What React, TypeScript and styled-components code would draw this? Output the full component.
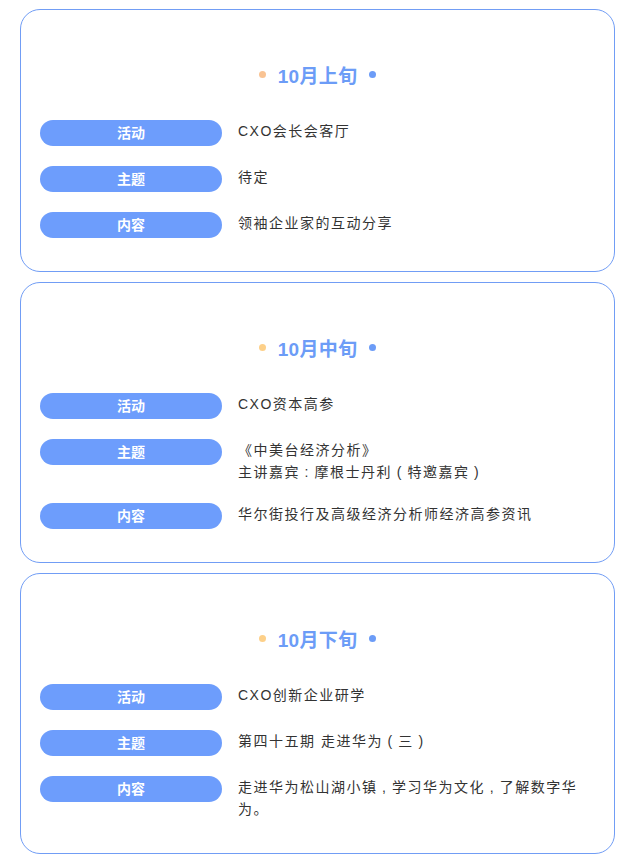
import React from 'react';
import styled, { createGlobalStyle } from 'styled-components';

const GlobalStyle = createGlobalStyle`
  body {
    margin: 0;
    background: #ffffff;
    font-family: "Liberation Sans", "Noto Sans CJK SC", sans-serif;
  }
`;

const Page = styled.div`
  display: flex;
  flex-direction: column;
  gap: 10px;
  padding: 9px 19px 10px 20px;
`;

const Card = styled.section`
  border: 1px solid #719df5;
  border-radius: 20px;
  padding: 48px 19px 33px 19px;
`;

const Heading = styled.div`
  display: flex;
  align-items: center;
  justify-content: center;
  gap: 12px;
  height: 32px;
  margin-bottom: 30px;
`;

const Dot = styled.span<{ $color: string }>`
  width: 7px;
  height: 7px;
  border-radius: 50%;
  background: ${(p) => p.$color};
`;

const Title = styled.h2`
  margin: 0;
  font-size: 19px;
  font-weight: bold;
  letter-spacing: 0.3px;
  color: #6c9cf7;
`;

const Rows = styled.div`
  display: flex;
  flex-direction: column;
  gap: 20px;
`;

const Row = styled.div`
  display: flex;
  align-items: flex-start;
  gap: 16px;
`;

const Pill = styled.div`
  flex: 0 0 182px;
  height: 26px;
  border-radius: 13px;
  background: #6d9dfc;
  color: #ffffff;
  font-size: 14px;
  font-weight: bold;
  line-height: 26px;
  text-align: center;
`;

const Text = styled.div`
  flex: 1;
  padding-right: 11px;
  font-size: 14px;
  line-height: 22px;
  letter-spacing: 1.5px;
  color: #333333;
`;

// full-width punctuation drawn centred in its em box
const Punct = styled.span`
  padding: 0 0.33em;
`;

const centred: Record<string, string> = { '，': ',', '：': ':', '（': '(', '）': ')' };

const renderLine = (line: string) =>
  line.split(/([，：（）])/).map((part, i) =>
    centred[part] ? <Punct key={i}>{centred[part]}</Punct> : part
  );

type Item = { label: string; lines: string[] };
type Period = { title: string; dot: string; items: Item[] };

const periods: Period[] = [
  {
    title: '10月上旬',
    dot: '#f9c393',
    items: [
      { label: '活动', lines: ['CXO会长会客厅'] },
      { label: '主题', lines: ['待定'] },
      { label: '内容', lines: ['领袖企业家的互动分享'] },
    ],
  },
  {
    title: '10月中旬',
    dot: '#fdd089',
    items: [
      { label: '活动', lines: ['CXO资本高参'] },
      { label: '主题', lines: ['《中美台经济分析》', '主讲嘉宾：摩根士丹利（特邀嘉宾）'] },
      { label: '内容', lines: ['华尔街投行及高级经济分析师经济高参资讯'] },
    ],
  },
  {
    title: '10月下旬',
    dot: '#fdd089',
    items: [
      { label: '活动', lines: ['CXO创新企业研学'] },
      { label: '主题', lines: ['第四十五期 走进华为（三）'] },
      { label: '内容', lines: ['走进华为松山湖小镇，学习华为文化，了解数字华为。'] },
    ],
  },
];

const App: React.FC = () => {
  return (
    <>
      <GlobalStyle />
      <Page>
        {periods.map((p) => (
          <Card key={p.title}>
            <Heading>
              <Dot $color={p.dot} />
              <Title>{p.title}</Title>
              <Dot $color="#6c9cf7" />
            </Heading>
            <Rows>
              {p.items.map((it) => (
                <Row key={it.label}>
                  <Pill>{it.label}</Pill>
                  <Text>
                    {it.lines.map((l, i) => (
                      <div key={i}>{renderLine(l)}</div>
                    ))}
                  </Text>
                </Row>
              ))}
            </Rows>
          </Card>
        ))}
      </Page>
    </>
  );
};

export default App;
